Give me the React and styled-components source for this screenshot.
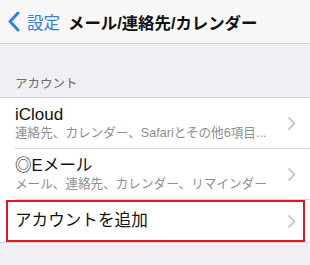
import React from "react";
import styled, { createGlobalStyle } from "styled-components";

const Global = createGlobalStyle`
  html, body { margin: 0; padding: 0; background: #efeff4; }
  body { font-family: "Liberation Sans", "Noto Sans CJK JP", sans-serif; -webkit-font-smoothing: antialiased; }
`;

const Page = styled.div`
  width: 310px;
  height: 265px;
  overflow: hidden;
  background: #efeff4;
`;

const NavBar = styled.div`
  height: 43px;
  display: flex;
  align-items: center;
  padding-left: 8px;
  background: #f7f7f8;
  border-bottom: 1px solid #cfcfd3;
`;

const BackButton = styled.div`
  display: flex;
  align-items: center;
  gap: 7px;
  color: #2f80ec;
  font-size: 16.5px;
`;

const Title = styled.div`
  margin-left: 8px;
  font-size: 16.4px;
  font-weight: bold;
  color: #111;
`;

const SectionHeader = styled.div`
  padding: 32px 15px 5px;
  font-size: 12.5px;
  line-height: 16px;
  color: #6d6d72;
`;

const List = styled.div`
  background: #fff;
  border-top: 1px solid #d4d4d8;
  border-bottom: 1px solid #d4d4d8;
`;

const Row = styled.div`
  position: relative;
  display: flex;
  align-items: center;
  height: ${(p) => (p.$tall ? "50px" : "42px")};
  padding: 0 14px 0 15px;
  ${(p) =>
    p.$highlight &&
    `&::after {
      content: "";
      position: absolute;
      left: 6px;
      right: 5px;
      top: 0;
      bottom: 0;
      border: 2px solid #e6141c;
      pointer-events: none;
    }`}
`;

const Separator = styled.div`
  height: 1px;
  margin-left: 15px;
  background: #d8d8dc;
`;

const RowText = styled.div`
  flex: 1;
  min-width: 0;
  display: flex;
  flex-direction: column;
`;

const Label = styled.div`
  font-size: ${(p) => (p.$jp ? "16.6px" : "17px")};
  line-height: 20px;
  color: #111;
`;

const Sub = styled.div`
  font-size: 12.6px;
  line-height: 17px;
  color: #8e8e93;
  white-space: nowrap;
`;

const Chevron = () => (
  <svg width="9" height="15" viewBox="0 0 9 15">
    <path d="M1.5 1.5 L7.5 7.5 L1.5 13.5" fill="none" stroke="#c7c7cc" strokeWidth="1.8" />
  </svg>
);

const BackChevron = () => (
  <svg width="12" height="21" viewBox="0 0 12 21">
    <path d="M10 2 L2 10.5 L10 19" fill="none" stroke="#2f80ec" strokeWidth="3" strokeLinecap="round" strokeLinejoin="round" />
  </svg>
);

export default function App() {
  return (
    <Page>
      <Global />
      <NavBar>
        <BackButton>
          <BackChevron />
          <span>設定</span>
        </BackButton>
        <Title>メール/連絡先/カレンダー</Title>
      </NavBar>
      <SectionHeader>アカウント</SectionHeader>
      <List>
        <Row $tall>
          <RowText>
            <Label>iCloud</Label>
            <Sub>連絡先、カレンダー、Safariとその他6項目...</Sub>
          </RowText>
          <Chevron />
        </Row>
        <Separator />
        <Row $tall>
          <RowText>
            <Label $jp>◎Eメール</Label>
            <Sub>メール、連絡先、カレンダー、リマインダー</Sub>
          </RowText>
          <Chevron />
        </Row>
        <Separator />
        <Row $highlight>
          <RowText>
            <Label $jp>アカウントを追加</Label>
          </RowText>
          <Chevron />
        </Row>
      </List>
    </Page>
  );
}
